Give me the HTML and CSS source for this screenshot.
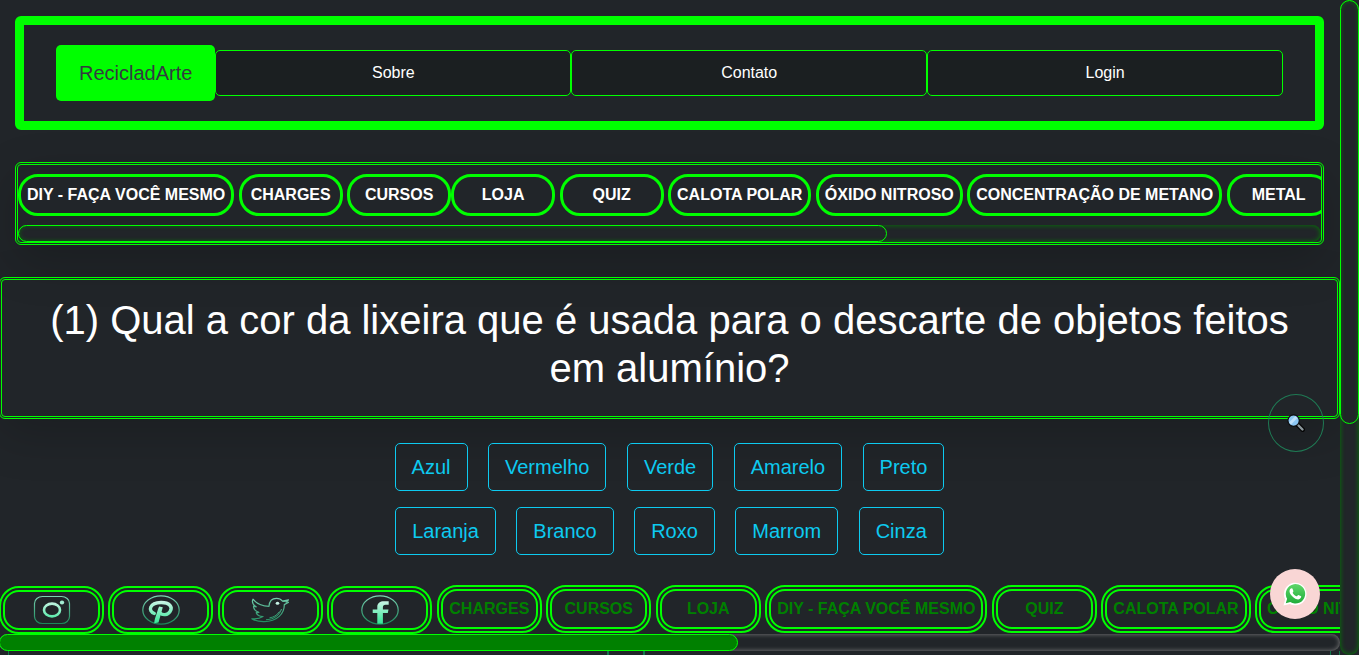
FILE: index.html
```html
<!DOCTYPE html>
<html lang="pt-BR">
<head>
<meta charset="utf-8">
<meta name="viewport" content="width=device-width, initial-scale=1">
<title>RecicladArte - Quiz</title>
<link rel="stylesheet" href="styles.css">
</head>
<body>
<div class="page">
  <div class="content">
    <header class="topbar">
      <a class="brand" href="#">RecicladArte</a>
      <nav class="topnav">
        <a class="topnav-link" href="#">Sobre</a>
        <a class="topnav-link" href="#">Contato</a>
        <a class="topnav-link" href="#">Login</a>
      </nav>
    </header>

    <section class="categories">
      <nav class="category-list">
        <a class="pill" href="#">DIY - FAÇA VOCÊ MESMO</a>
        <a class="pill" href="#">CHARGES</a>
        <a class="pill" href="#">CURSOS</a><a class="pill" href="#">LOJA</a>
        <a class="pill" href="#">QUIZ</a>
        <a class="pill" href="#">CALOTA POLAR</a>
        <a class="pill" href="#">ÓXIDO NITROSO</a>
        <a class="pill" href="#">CONCENTRAÇÃO DE METANO</a>
        <a class="pill" href="#">METAL</a>
      </nav>
      <div class="track"><div class="thumb thumb-category"></div></div>
    </section>

    <main>
      <section class="question">
        <h1>(1) Qual a cor da lixeira que é usada para o descarte de objetos feitos em alumínio?</h1>
      </section>
      <div class="answers">
        <button class="answer" type="button">Azul</button>
        <button class="answer" type="button">Vermelho</button>
        <button class="answer" type="button">Verde</button>
        <button class="answer" type="button">Amarelo</button>
        <button class="answer" type="button">Preto</button>
        <button class="answer" type="button">Laranja</button>
        <button class="answer" type="button">Branco</button>
        <button class="answer" type="button">Roxo</button>
        <button class="answer" type="button">Marrom</button>
        <button class="answer" type="button">Cinza</button>
      </div>
    </main>
  </div>

  <footer class="dock">
    <nav class="dock-list">
      <a class="dock-link dock-icon" href="#" aria-label="Instagram"><svg class="social" viewBox="0 0 38 30">
        <defs>
          <linearGradient id="line" gradientUnits="userSpaceOnUse" x1="0" y1="0" x2="0" y2="30"><stop offset="0" stop-color="#7fd6b8"/><stop offset="1" stop-color="#168455"/></linearGradient>
          <linearGradient id="solid" gradientUnits="userSpaceOnUse" x1="0" y1="5" x2="0" y2="29"><stop offset="0" stop-color="#d2f5ea"/><stop offset="1" stop-color="#2fe694"/></linearGradient>
        </defs>
        <rect x="1.5" y="1.5" width="35" height="27" rx="8" ry="7" fill="none" stroke="url(#line)" stroke-width="1.2"/>
        <ellipse cx="19" cy="15" rx="8" ry="6.4" fill="none" stroke="url(#solid)" stroke-width="2.6"/>
        <ellipse cx="29" cy="7.5" rx="2.2" ry="1.9" fill="#a4ecd3"/>
      </svg></a>
      <a class="dock-link dock-icon" href="#" aria-label="Pinterest"><svg class="social" viewBox="0 0 38 30">
        <ellipse cx="19" cy="15" rx="18.2" ry="14.2" fill="none" stroke="url(#line)" stroke-width="1.2"/>
        <path d="M12.300 18.500C5.500 16 7.500 7.700 19 7.500C27.500 7.400 31 12 28.200 16.300C25.800 20.200 20.500 20.700 18 17.800" fill="none" stroke="url(#solid)" stroke-width="3.400" stroke-linecap="round"/>
        <path d="M17.200 11.500L20.800 12.300L16.500 27.500L12.200 28.300C12.300 25 13.800 21 15 17.500C15.800 15 16.200 13 17.200 11.500Z" fill="url(#solid)"/>
      </svg></a>
      <a class="dock-link dock-icon" href="#" aria-label="Twitter"><svg class="social" viewBox="0 0 38 30">
        <path d="M2 4.2C5 8 10.500 11 18 11.300C18.300 7 20.500 3.400 25.500 3.400C28.500 3.400 30.300 4.600 31.500 6.100L37.500 4.800L35.200 7.200L37.700 7.300L33.300 9.600C33.500 18 26.500 27 12.500 26.700C7.500 26.700 3.500 25.500 .800 23.800C5 24.200 9 23.600 12 21.600C8.500 21.300 6 19.800 5.200 17.700L7.800 17.400C4.300 16.200 2.500 13.700 2.500 11.100L5.200 11.800C1.800 9.500 .800 6.500 2 4.200Z" fill="none" stroke="url(#line)" stroke-width="1.200" stroke-linejoin="round"/>
        <path d="M30.500 14C28.500 20 23.500 24.500 15 24.700M28.500 16.500C26 20.500 22 22.500 18.500 22.800M31.700 6.400L36 6.200" fill="none" stroke="url(#line)" stroke-width="1"/>
        <ellipse cx="26.500" cy="8.300" rx="1.800" ry="1.500" fill="#c8f3e6"/>
      </svg></a>
      <a class="dock-link dock-icon" href="#" aria-label="Facebook"><svg class="social" viewBox="0 0 38 30">
        <ellipse cx="19" cy="15" rx="18.2" ry="14.2" fill="none" stroke="url(#line)" stroke-width="1.2"/>
        <path d="M16.300 28.800V18H11.700V14.500H16.300V12C16.300 8.200 19 6.300 23 6.300H27.700V9.800H24.600C22.600 9.800 21.900 10.700 21.900 12.200V14.500H27.500L26.800 18H21.900V28.800Z" fill="url(#solid)"/>
      </svg></a>
      <a class="dock-link" href="#">CHARGES</a>
      <a class="dock-link" href="#">CURSOS</a>
      <a class="dock-link" href="#">LOJA</a>
      <a class="dock-link" href="#">DIY - FAÇA VOCÊ MESMO</a>
      <a class="dock-link" href="#">QUIZ</a>
      <a class="dock-link" href="#">CALOTA POLAR</a>
      <a class="dock-link" href="#">ÓXIDO NITROSO</a>
    </nav>
    <div class="track track-dock"><div class="thumb thumb-dock"></div></div>
    <div class="peek"><span class="peek-side"></span><span class="peek-middle"></span><span class="peek-side"></span></div>
  </footer>

  <button class="search-button" type="button" aria-label="Pesquisar"><svg width="18" height="18" viewBox="0 0 18 18">
    <path d="M10.500 10.500L15.700 15.700" stroke="#050505" stroke-width="4.600" stroke-linecap="round"/>
    <path d="M11 11L15.500 15.500" stroke="#8b979c" stroke-width="2.400" stroke-linecap="round"/>
    <circle cx="6.600" cy="6.600" r="5.700" fill="#8cc7f4" stroke="#0b0c0d" stroke-width="1.200"/>
    <path d="M2.200 8.200L8.200 2.200A4.500 4.500 0 0 1 10.400 4L4 10.400A4.500 4.500 0 0 1 2.200 8.200Z" fill="#bfe1fa"/>
  </svg></button>

  <a class="whatsapp-button" href="#" aria-label="WhatsApp"><svg width="24" height="24" viewBox="0 0 24 24">
    <defs><linearGradient id="wa" x1="0" y1="0" x2="0" y2="1"><stop offset="0" stop-color="#5fd669"/><stop offset="1" stop-color="#20ad3b"/></linearGradient></defs>
    <path d="M.5 23.500L2.200 17.300A11.300 11.300 0 1 1 6.700 21.900Z" fill="#fff"/>
    <path d="M2.800 21.300L4.100 16.700A9.700 9.700 0 1 1 7.300 20Z" fill="url(#wa)"/>
    <path d="M8.600 6.300C7.800 6.300 6.500 7.400 6.500 9.200C6.500 12.500 11.600 17.400 15.300 17.400C17 17.300 18.400 15.700 18.200 14.300L15.400 12.900C14.700 12.700 14.200 14.500 13.500 14.300C11.900 13.700 10.500 12.400 9.700 10.900C9.500 10.300 10.600 9.700 10.400 9L9.400 6.600Z" fill="#fff"/>
  </svg></a>
</div>
<div class="page-track"><div class="page-thumb"></div></div>
</body>
</html>
```

FILE: styles.css
```css
* {
  box-sizing: border-box;
}

body {
  display: flex;
  height: 100vh;
  margin: 0;
  overflow: hidden;
  background: #212529;
  color: #fff;
  font: 16px/24px "Liberation Sans", Arial, sans-serif;
}

a {
  color: inherit;
  text-decoration: none;
}

.page {
  display: flex;
  flex: 1;
  flex-direction: column;
  min-width: 0;
  margin-left: -1px;
}

.content {
  flex: 1;
  min-height: 0;
  overflow: hidden;
}

/* Top bar */
.topbar {
  display: flex;
  align-items: center;
  margin: 16px 16px 32px;
  padding: 20px 32px;
  border: 9px solid #0f0;
  border-radius: 6px;
}

.brand {
  padding: 13px 23px;
  border-radius: 5px;
  background: #0f0;
  color: #343a40;
  font-size: 20px;
  line-height: 30px;
}

.topnav {
  display: flex;
  flex: 1;
}

.topnav-link {
  flex: 1;
  padding: 10px;
  border: 1px solid #0f0;
  border-radius: 5px;
  background: #1b1f21;
  text-align: center;
}

/* Category strip */
.categories {
  margin: 0 16px 32px;
  border: 3px double #0f0;
  border-radius: 6px;
  box-shadow: 0 16px 48px rgba(0, 0, 0, .175);
}

.category-list {
  padding: 9px 0;
  overflow: hidden;
  white-space: nowrap;
}

.pill,
.dock-link {
  display: inline-block;
  min-width: 104px;
  padding: 6px;
  border: 3px solid #0f0;
  border-radius: 20px;
  font-weight: bold;
  text-align: center;
  vertical-align: top;
}

.track {
  height: 17px;
  border-radius: 10px;
  box-shadow: inset 0 0 5px green;
}

.thumb {
  height: 100%;
  border: 1px solid #0f0;
  border-radius: 10px;
}

.thumb-category {
  width: 66.7%;
}

/* Question */
.question {
  padding: 16px 32px 24px;
  border: 3px double #0f0;
  border-radius: 6px;
  box-shadow: 0 16px 48px rgba(0, 0, 0, .175);
}

.question h1 {
  margin: 0;
  font-size: 40px;
  font-weight: normal;
  line-height: 48px;
  text-align: center;
}

.answers {
  max-width: 600px;
  margin: 16px auto;
  text-align: center;
}

.answer {
  margin: 8px;
  padding: 8px 16px;
  border: 1px solid #0dcaf0;
  border-radius: 5px;
  background: transparent;
  color: #0dcaf0;
  font: 20px/30px "Liberation Sans", Arial, sans-serif;
  vertical-align: top;
}

/* Bottom dock */
.dock-list {
  overflow: hidden;
  white-space: nowrap;
}

.dock-link {
  min-width: 105px;
  margin-bottom: 1px;
  border: 6px double #0f0;
  color: green;
}

.dock-icon {
  margin: 1px 0 0;
}

.social {
  display: block;
  width: 38px;
  height: 30px;
  margin: -3px auto;
}

.track-dock {
  box-shadow: inset 0 0 5px #808080;
}

.thumb-dock {
  width: 55.1%;
  background: green;
}

.peek {
  display: flex;
  justify-content: space-between;
  height: 4px;
  padding-left: 9px;
}

.peek-middle {
  width: 38px;
  margin-right: auto;
  margin-left: 589px;
  border: solid #14754b;
  border-width: 0 2px;
}

.peek-side {
  width: 10px;
  border: solid #14754b;
  border-width: 0 1px;
}

.peek-side:first-child {
  border-right-width: 0;
}

/* Floating buttons */
.search-button,
.whatsapp-button {
  position: fixed;
  display: flex;
  align-items: center;
  justify-content: center;
  padding: 0;
  border-radius: 50%;
}

.search-button {
  right: 35px;
  bottom: 203px;
  width: 56px;
  height: 58px;
  border: 1px solid #1f7a54;
  background: transparent;
}

.whatsapp-button {
  right: 39px;
  bottom: 36px;
  width: 50px;
  height: 50px;
  background: #f9d6d5;
}

/* Page scrollbar */
.page-track {
  width: 19px;
  border-radius: 10px;
  box-shadow: inset 0 0 5px green;
}

.page-thumb {
  height: 64.7%;
  border: 1px solid #0f0;
  border-radius: 10px;
}
```
